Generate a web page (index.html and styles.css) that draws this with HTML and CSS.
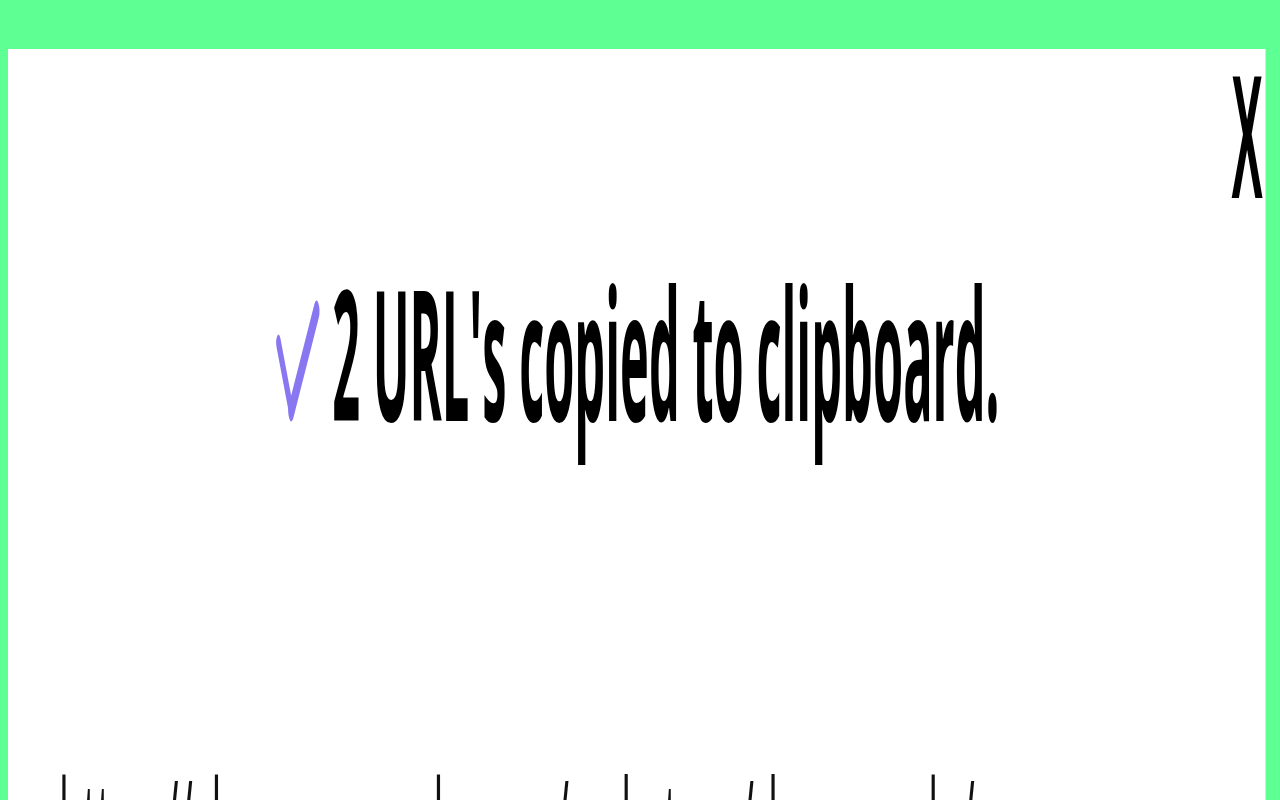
FILE: index.html
```html
<!DOCTYPE html>
<html lang="en">
<head>
<meta charset="utf-8">
<title>Copied</title>
<link rel="stylesheet" href="styles.css">
</head>
<body>
<div class="stage">
  <div class="popup">
    <div class="popup-head"><span class="close">X</span></div>
    <p class="message"><svg class="check" viewBox="0 0 18 13" width="18" height="13" aria-hidden="true"><path class="check-short" d="M1.2 4.6 L6.3 11.9"/><path class="check-long" d="M6.3 11.9 L16.4 1.2"/></svg> 2 URL's copied to clipboard.</p>
    <ul class="urls">
      <li>https://chrome.google.com/webstore/devconsole/</li>
      <li>https://chrome.google.com/webstore/category/extensions</li>
    </ul>
  </div>
</div>
</body>
</html>
```
FILE: styles.css
```css
html, body {
  margin: 0;
  padding: 0;
}
body {
  box-sizing: border-box;
  width: 1280px;
  height: 800px;
  padding: 49px 0 0 8px;
  overflow: hidden;
  background: #5eff93;
}
.stage {
  width: 503.2px;
  height: 90px;
  transform: scale(2.5, 9.3);
  transform-origin: 0 0;
}
.popup {
  background: #ffffff;
  height: 100%;
}
.popup-head {
  display: flex;
  justify-content: flex-end;
  height: 19px;
  padding-right: 1.2px;
}
.close {
  margin-top: -0.3px;
  font: 700 19px/1 "Liberation Sans", Arial, sans-serif;
  color: #000;
  cursor: pointer;
}
.message {
  margin: 0;
  padding-top: 0.4px;
  text-align: center;
  font: 700 19.5px/27px "Open Sans", "Noto Sans", sans-serif;
  color: #000;
}
.check {
  display: inline-block;
  vertical-align: 0.9px;
  overflow: visible;
  fill: none;
  stroke: #8877f0;
  stroke-linecap: round;
}
.check-short {
  stroke-width: 1.8;
}
.check-long {
  stroke-width: 2.3;
}
.urls {
  margin: 27px 0 0;
  padding: 0 0 0 20.4px;
  list-style: none;
  font: 400 15.7px/1.4 "Open Sans", "Noto Sans", sans-serif;
  color: #111;
}
```
